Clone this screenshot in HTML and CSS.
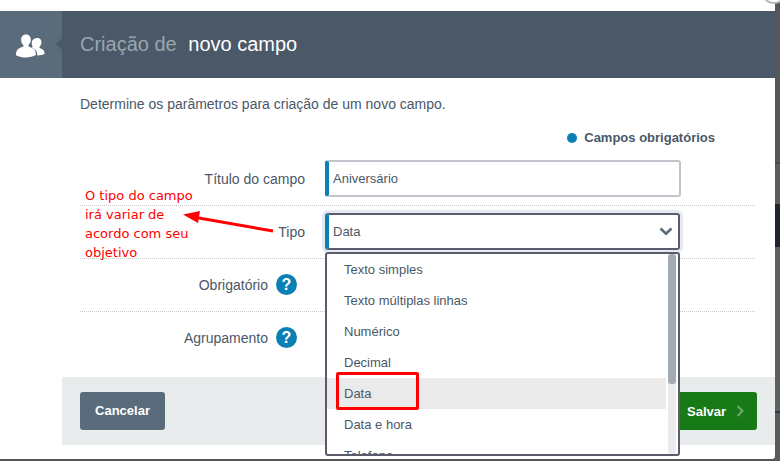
FILE: index.html
```html
<!DOCTYPE html>
<html>
<head>
    <title>Criação de novo campo</title>
    <link rel="stylesheet" href="styles.css">
</head>
<body>
    <div class="page">
        <div class="modal">
            <div class="modal-header">
                <div class="header-icon">
                    <svg width="30" height="26" viewBox="0 0 30 26">
                        <path fill="#fff" d="M11 1.500c3 0 4.800 2.200 4.800 5 0 2.300-1 4.300-2.300 5.400v1.700c2.400.8 5.300 1.900 6.200 3.500 1 1.600 1.200 3.500 1.200 5-2.700 1.500-6.300 2.400-10 2.400-3.500 0-6.700-.6-10-2.300 0-1.800.3-3.700 1.200-5.100 1-1.500 3.900-2.700 6.300-3.500v-1.700C7 10.800 6.100 8.800 6.100 6.500c0-2.800 1.900-5 4.900-5z"/>
                        <path fill="#fff" d="M22.500 5c2.500 0 4 1.800 4 4.200 0 1.900-.8 3.500-1.900 4.400v1.500c1.500.5 3 1.200 3.800 2 .9 1.100 1.100 2.500 1.100 4-1.500.8-3.800 1.300-7.200 1.300 0-2.200-.6-4.100-1.900-5.400-1-1-2.300-1.800-3.400-2.300l.6-1.300c-.6-1-.9-2.200-.9-3.500C16.700 6.800 19.500 5 22.500 5z"/>
                    </svg>
                </div>
                <h1 class="modal-title">Criação de <strong>novo campo</strong></h1>
            </div>

            <div class="modal-content">
                <p class="intro">Determine os parâmetros para criação de um novo campo.</p>
                <div class="legend"><span class="legend-dot"></span>Campos obrigatórios</div>

                <div class="form-row">
                    <div class="form-label">Título do campo</div>
                    <div class="field">
                        <div class="input">Aniversário</div>
                    </div>
                </div>

                <div class="form-row">
                    <div class="form-label">Tipo</div>
                    <div class="field">
                        <div class="input input-open">
                            Data
                            <svg class="chevron" width="14" height="9" viewBox="0 0 14 9">
                                <path fill="none" stroke="#5a6b7c" stroke-width="2.6" d="M1.500 1.500 7 6.800l5.500-5.300"/>
                            </svg>
                        </div>
                        <div class="dropdown">
                            <ul class="dropdown-list">
                                <li>Texto simples</li>
                                <li>Texto múltiplas linhas</li>
                                <li>Numérico</li>
                                <li>Decimal</li>
                                <li class="active">Data</li>
                                <li>Data e hora</li>
                                <li>Telefone</li>
                            </ul>
                            <div class="scrollbar"><div class="scroll-thumb"></div></div>
                        </div>
                    </div>
                </div>

                <div class="form-row">
                    <div class="form-label">Obrigatório <span class="help">?</span></div>
                </div>

                <div class="form-row last">
                    <div class="form-label">Agrupamento <span class="help">?</span></div>
                </div>

                <div class="modal-footer">
                    <button class="btn btn-cancel">Cancelar</button>
                    <button class="btn btn-save">Salvar
                        <svg width="8" height="12" viewBox="0 0 8 12">
                            <path fill="none" stroke="#6fa96f" stroke-width="2" d="M1.500 1 6.500 6l-5 5"/>
                        </svg>
                    </button>
                </div>
            </div>
        </div>
        <div class="backdrop"></div>

        <!-- anotacoes em vermelho por cima do print -->
        <div class="note">O tipo do campo<br>irá variar de<br>acordo com seu<br>objetivo</div>
        <svg class="note-arrow" width="96" height="24" viewBox="0 0 96 24">
            <path fill="none" stroke="#f00" stroke-width="3" d="M91 20 14 6.500"/>
            <path fill="#f00" d="M1 3.500 18 0l-2 12z"/>
        </svg>
        <div class="note-box"></div>
        <div class="close-circle"></div>
    </div>
</body>
</html>
```

FILE: styles.css
```css
* {
    box-sizing: border-box;
}

body {
    margin: 0;
    padding: 0;
    font-family: "Liberation Sans", Arial, sans-serif;
    background-color: #555;
}

.page {
    position: relative;
    display: flex;
    width: 780px;
    height: 461px;
    overflow: hidden;
}

.modal {
    width: 775px;
    height: 459px;
    padding-top: 11px;
    background-color: #fff;
    border-bottom-right-radius: 3px;
}

.backdrop {
    flex: 1;
    background: linear-gradient(#585858 0 162px, #464646 162px 164px, #5c5c5c 164px 204px,
        #1f2530 204px 247px, #5f5f5f 247px 411px, #2c3a46 411px 413px, #5a5a5a 413px);
}

.modal-header {
    display: flex;
    align-items: center;
    height: 67px;
    background-color: #4a5868;
}

.header-icon {
    position: relative;
    display: flex;
    align-items: center;
    justify-content: center;
    width: 62px;
    height: 67px;
    padding: 2px 3px 0 0;
    background-color: #5a6b7c;
}

.header-icon::after {
    content: "";
    position: absolute;
    right: 0;
    top: 27px;
    border: 6px solid transparent;
    border-left-width: 0;
    border-right-color: #4a5868;
}

.modal-title {
    margin: 0 0 0 18px;
    font-size: 20px;
    font-weight: normal;
    color: #9aa6af;
}

.modal-title strong {
    margin-left: 6px;
    font-weight: normal;
    color: #fff;
}

.modal-content {
    margin-left: 62px;
}

.intro {
    margin: 16px 0 0 18px;
    font-size: 14px;
    line-height: 20px;
    color: #4a5868;
}

.legend {
    display: flex;
    align-items: center;
    justify-content: flex-end;
    height: 18px;
    margin: 14px 60px 0 0;
    font-size: 13px;
    font-weight: bold;
    color: #4a5868;
}

.legend-dot {
    width: 10px;
    height: 10px;
    margin: 1px 7px 0 0;
    border-radius: 50%;
    background-color: #0a80b5;
}

.form-row {
    display: flex;
    align-items: center;
    margin: 0 20px 0 18px;
    padding: 7px 0 8px;
    border-bottom: 1px dotted #c8c8c8;
}

.legend + .form-row {
    padding-top: 14px;
}

.form-row.last {
    padding-bottom: 21px;
    border-bottom: 0;
}

.form-label {
    display: flex;
    align-items: center;
    justify-content: flex-end;
    gap: 8px;
    width: 225px;
    height: 37px;
    font-size: 14px;
    color: #4a5868;
}

.help {
    width: 21px;
    height: 21px;
    margin-right: 8px;
    border-radius: 50%;
    background-color: #0a80b5;
    color: #fff;
    font-size: 16px;
    font-weight: bold;
    line-height: 21px;
    text-align: center;
}

.field {
    position: relative;
    width: 356px;
    margin-left: 20px;
}

.input {
    display: flex;
    align-items: center;
    justify-content: space-between;
    height: 37px;
    padding: 0 5px 0 4px;
    border: 2px solid #c0c5cb;
    border-left: 4px solid #0a80b5;
    border-radius: 3px;
    background-color: #fff;
    font-size: 13px;
    color: #4a5868;
}

.input-open {
    width: 355px;
    border-color: #5b5b6b;
    border-left-color: #0a80b5;
    box-shadow: 0 0 0 3px #e4e9f2;
}

.dropdown {
    position: absolute;
    top: 39px;
    left: 0;
    z-index: 2;
    display: flex;
    width: 355px;
    height: 204px;
    border: 2px solid #5b5b6b;
    border-radius: 3px;
    background-color: #fff;
    overflow: hidden;
}

.dropdown-list {
    flex: 1;
    margin: 0;
    padding: 0;
    list-style: none;
}

.dropdown-list li {
    height: 31px;
    padding-left: 17px;
    font-size: 13px;
    line-height: 31px;
    color: #4a5868;
}

.dropdown-list li.active {
    background-color: #ebebeb;
}

.scrollbar {
    width: 8px;
    margin: 0 2px 0 2px;
    border-radius: 3px;
    background-color: #ebebeb;
}

.scroll-thumb {
    height: 130px;
    border-radius: 3px;
    background-color: #a4abb1;
}

.modal-footer {
    display: flex;
    align-items: center;
    justify-content: space-between;
    height: 68px;
    padding: 0 18px;
    background-color: #e9eced;
}

.btn {
    height: 38px;
    border: 0;
    border-radius: 3px;
    color: #fff;
    font-family: "Liberation Sans", Arial, sans-serif;
    font-size: 13px;
    font-weight: bold;
}

.btn-cancel {
    width: 85px;
    padding-bottom: 3px;
    background-color: #5a6b7c;
}

.btn-save {
    display: flex;
    align-items: center;
    gap: 10px;
    width: 90px;
    padding-left: 20px;
    background-color: #177a17;
}

.note {
    position: absolute;
    left: 85px;
    top: 186px;
    font-family: "DejaVu Sans", sans-serif;
    font-size: 13px;
    line-height: 19px;
    color: #f00;
}

.note-arrow {
    position: absolute;
    left: 182px;
    top: 211px;
}

.note-box {
    position: absolute;
    left: 336px;
    top: 372px;
    z-index: 3;
    width: 83px;
    height: 38px;
    border: 3px solid #f00;
    border-radius: 2px;
}

.close-circle {
    position: absolute;
    left: 762px;
    top: -18px;
    width: 24px;
    height: 22px;
    border: 2px solid #bbb;
    border-radius: 50%;
    background-color: #fff;
}
```
